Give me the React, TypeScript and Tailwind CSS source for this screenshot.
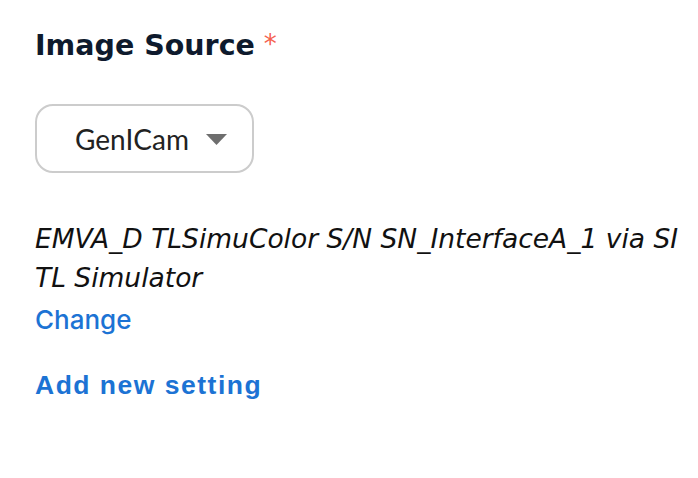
export default function App() {
  return (
    <div className="min-h-[478px] w-[698px] bg-white pl-[35px] pt-[26px]">
      <h2 className="flex items-start text-[28.5px] font-bold leading-[40px] text-[#0e1a2d] [font-family:'DejaVu_Sans',sans-serif]">
        Image Source
        <span className="ml-[9px] mt-[-2px] text-[26px] font-normal text-[#f5624f]">*</span>
      </h2>

      <button className="mt-[38px] flex h-[69px] w-[219px] items-center rounded-[18px] border-2 border-[#cccccc] bg-white pl-[38px] text-[28px] text-[#222222] [font-family:Lato,sans-serif]">
        GenICam
        <svg className="ml-[17px] mt-[2px]" width="21" height="11" viewBox="0 0 21 11">
          <path d="M0 0 H21 L10.5 11 Z" fill="#6e6e6e" />
        </svg>
      </button>

      <p className="mt-[46px] w-[660px] text-[26.5px] italic leading-[39px] text-[#111111] [font-family:'DejaVu_Sans',sans-serif]">
        EMVA_D TLSimuColor S/N SN_InterfaceA_1 via SI TL Simulator
      </p>
      <a className="mt-[3px] block text-[26px] font-medium leading-[40px] text-[#1c73d4] [font-family:Inter,sans-serif]" href="#">
        Change
      </a>
      <a className="mt-[25px] block text-[26.5px] font-bold leading-[40px] tracking-[1.5px] text-[#1c73d4] [font-family:'Liberation_Sans',Arial,sans-serif]" href="#">
        Add new setting
      </a>
    </div>
  );
}
